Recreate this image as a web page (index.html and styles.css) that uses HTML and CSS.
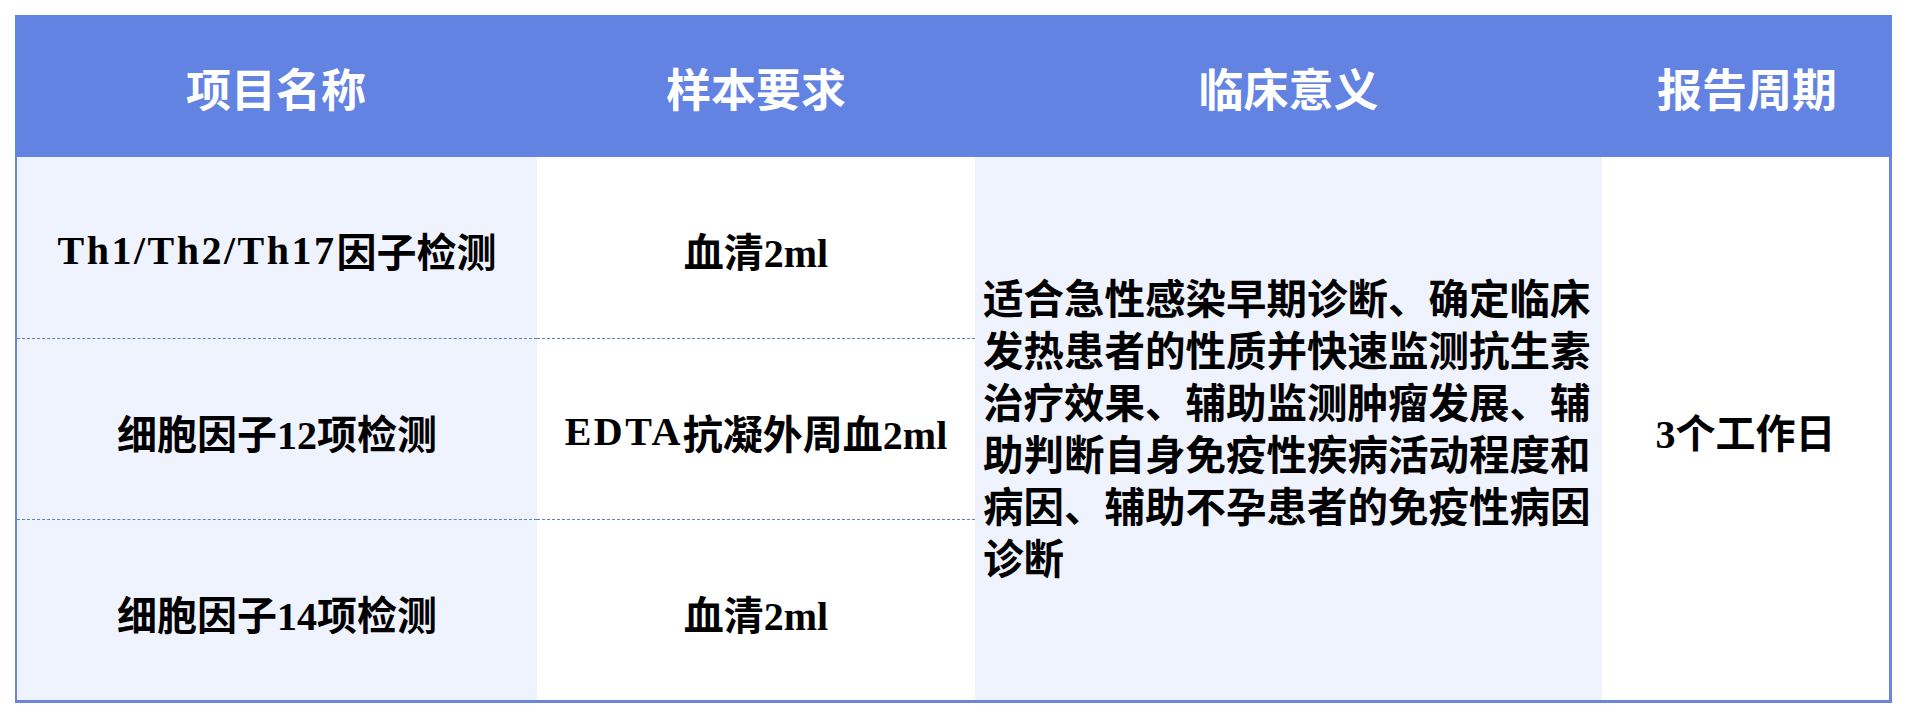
FILE: index.html
```html
<!DOCTYPE html>
<html lang="zh-CN">
<head>
<meta charset="utf-8">
<title>项目表</title>
<link rel="stylesheet" href="styles.css">
</head>
<body>
<div class="sheet">
  <div class="head">
    <div class="hcell">项目名称</div>
    <div class="hcell">样本要求</div>
    <div class="hcell">临床意义</div>
    <div class="hcell">报告周期</div>
  </div>
  <div class="body">
    <div class="cell c1 r1"><span class="lat">Th1/Th2/Th17</span>因子检测</div>
    <div class="cell c2 r1">血清2ml</div>
    <div class="cell c3 span"><p class="desc">适合急性感染早期诊断、确定临床发热患者的性质并快速监测抗生素治疗效果、辅助监测肿瘤发展、辅助判断自身免疫性疾病活动程度和病因、辅助不孕患者的免疫性病因诊断</p></div>
    <div class="cell c4 span">3个工作日</div>
    <div class="cell c1 r2 dash">细胞因子12项检测</div>
    <div class="cell c2 r2 dash"><span class="lat">EDTA</span>抗凝外周血2ml</div>
    <div class="cell c1 r3 dash">细胞因子14项检测</div>
    <div class="cell c2 r3 dash">血清2ml</div>
  </div>
</div>
</body>
</html>
```
FILE: styles.css
```css
html, body {
  margin: 0;
  padding: 0;
  background: #ffffff;
}

.sheet {
  width: 1877px;
  padding: 15px 0 0 15px;
  font-family: "Liberation Serif", "Noto Sans CJK SC", serif;
  font-weight: 700;
}

.head {
  display: grid;
  grid-template-columns: 522px 438px 627px 290px;
  height: 142px;
  background: #6383e3;
}

.hcell {
  display: flex;
  align-items: center;
  justify-content: center;
  color: #ffffff;
  font-size: 45px;
  padding-top: 2px;
}

.body {
  display: grid;
  grid-template-columns: 520px 438px 627px 287px;
  grid-template-rows: 181px 181px 181px;
  border-left: 2px solid #6b86d8;
  border-right: 3px solid #6b86d8;
  border-bottom: 3px solid #6b86d8;
}

.cell {
  display: flex;
  align-items: center;
  justify-content: center;
  font-size: 40px;
  color: #000000;
  padding-top: 5px;
  box-sizing: border-box;
}

.c1 { grid-column: 1; background: #eff3fd; }
.c2 { grid-column: 2; background: #ffffff; }
.c3 { grid-column: 3; background: #eff3fd; }
.c4 { grid-column: 4; background: #ffffff; }

.r1 { grid-row: 1; }
.r2 { grid-row: 2; }
.r3 { grid-row: 3; }
.span { grid-row: 1 / 4; }

.dash {
  border-top: 1px dashed #627dc8;
}

.lat {
  letter-spacing: 2.5px;
}

.desc {
  margin: 0;
  width: 100%;
  padding: 0 8px;
  box-sizing: border-box;
  font-size: 40.5px;
  line-height: 52px;
  text-align: left;
}
```
